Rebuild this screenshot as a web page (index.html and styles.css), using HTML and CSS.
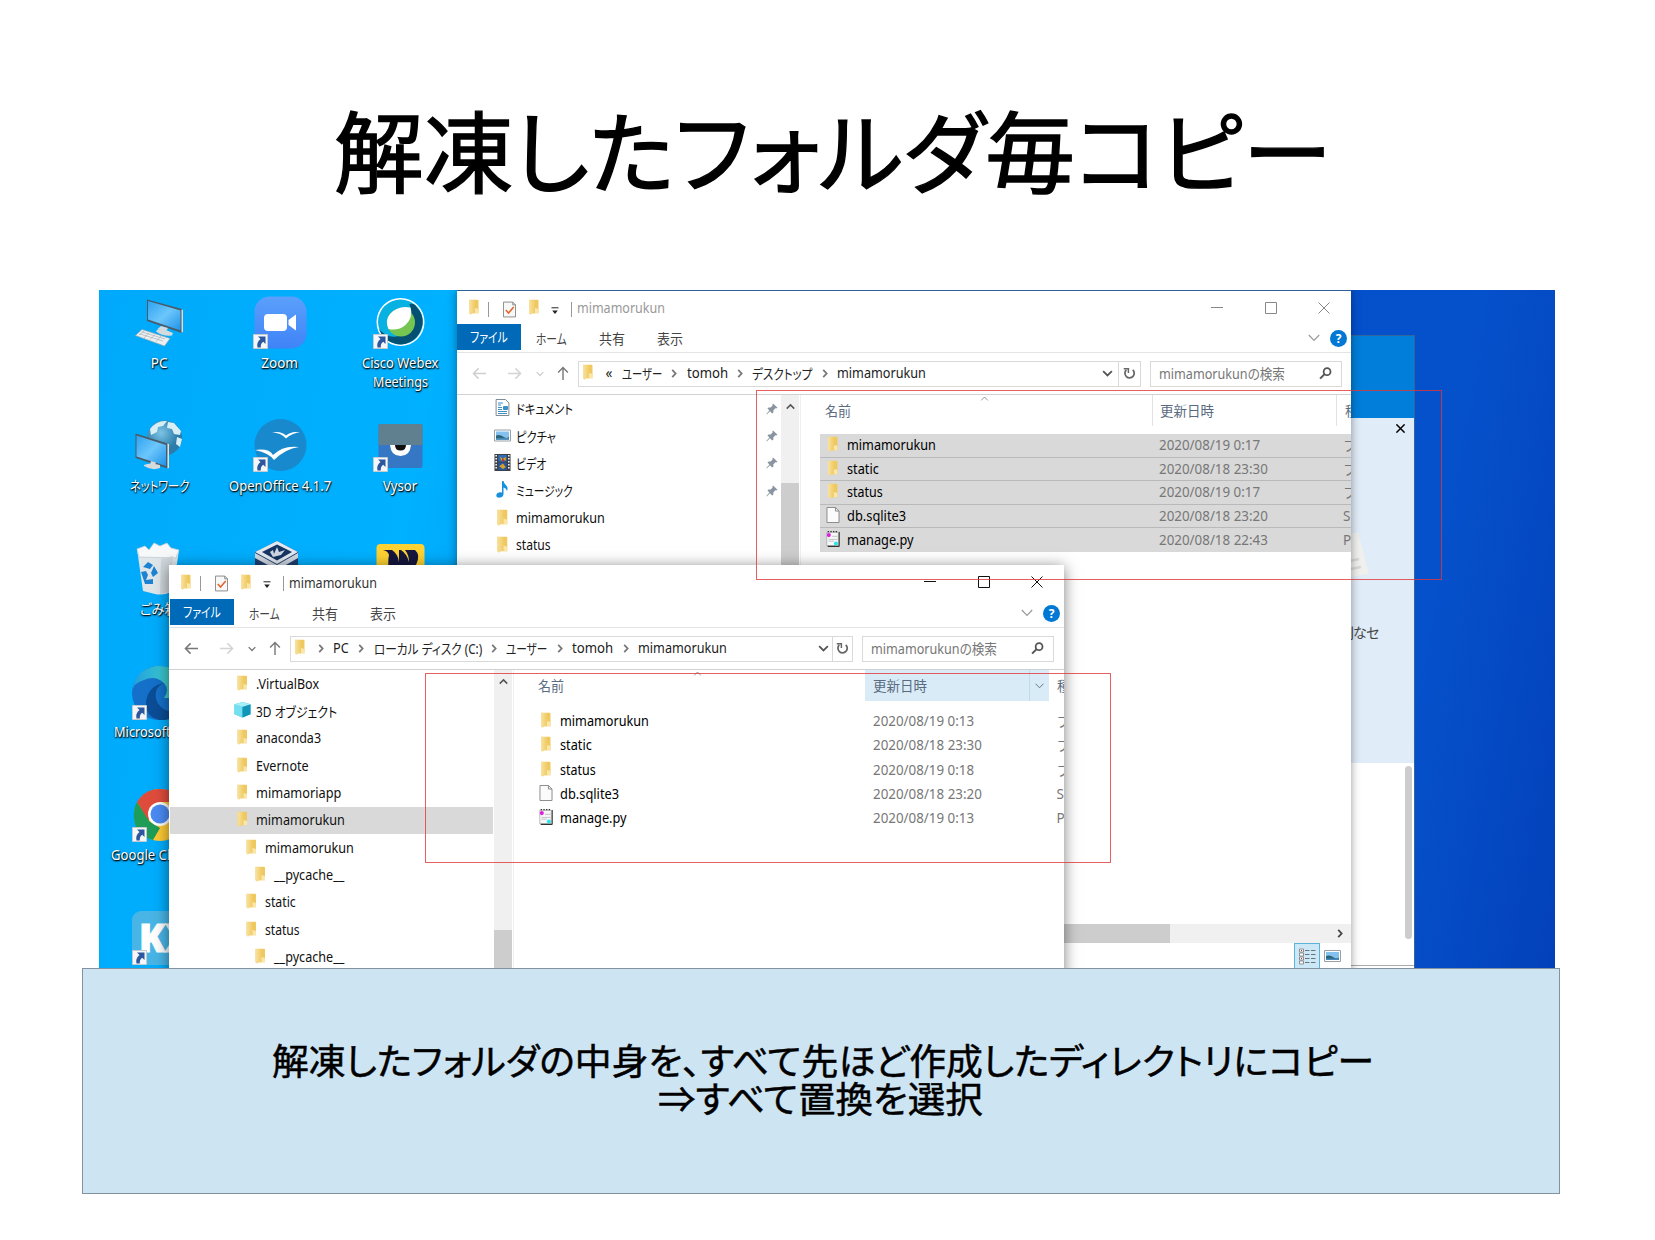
FILE: index.html
```html
<!DOCTYPE html>
<html lang="ja">
<head>
<meta charset="utf-8">
<title>解凍したフォルダ毎コピー</title>
<link rel="stylesheet" href="styles.css">
</head>
<body>
<svg class="defs" aria-hidden="true">
  <defs>
    <linearGradient id="gFolder" x1="0" x2="1"><stop offset="0" stop-color="#f9e2a0"/><stop offset="1" stop-color="#f0cb66"/></linearGradient>
    <linearGradient id="gScreen" x1="0" y1="0" x2="1" y2="1"><stop offset="0" stop-color="#2da2f2"/><stop offset=".5" stop-color="#6cc6fb"/><stop offset="1" stop-color="#1f93e8"/></linearGradient>
    <linearGradient id="gZoom" x1="0" y1="0" x2="0" y2="1"><stop offset="0" stop-color="#5ba0fb"/><stop offset="1" stop-color="#3f83f8"/></linearGradient>
    <linearGradient id="gEdge" x1="0" y1="0" x2="1" y2="0"><stop offset="0" stop-color="#1f9ddf"/><stop offset=".6" stop-color="#3ac6cf"/><stop offset="1" stop-color="#6bdc6a"/></linearGradient>
    <radialGradient id="gGlobe" cx=".4" cy=".35"><stop offset="0" stop-color="#7cc4e6"/><stop offset="1" stop-color="#2b7ca8"/></radialGradient>
  </defs>
  <symbol id="folder" viewBox="0 0 12 16"><path d="M1 .8h8.6q.9 0 .9.9v12.6H4L2.4 15.6 1 14z" fill="#efc95f"/><path d="M1 1h6v13.2H4.2L2.6 15.6 1 14.2z" fill="url(#gFolder)"/><path d="M7 9l3.5 1v4.3H7z" fill="#fae6aa"/></symbol>
  <symbol id="check" viewBox="0 0 14 17"><path d="M.5.5h10l3 3v13H.5z" fill="#f8f8f8" stroke="#858585"/><path d="M10.5.5v3h3" fill="none" stroke="#858585"/><path d="M3 9l3 3.4 5.5-6.6" fill="none" stroke="#e0672c" stroke-width="1.7"/></symbol>
  <symbol id="qat" viewBox="0 0 8 8"><path d="M.5.8h7" stroke="#222"/><path d="M1.2 3.6h5.6L4 7z" fill="#222"/></symbol>
  <symbol id="left" viewBox="0 0 16 14"><path d="M15 7H1.5M7 1.5L1.5 7 7 12.5" fill="none" stroke="currentColor" stroke-width="1.6"/></symbol>
  <symbol id="right" viewBox="0 0 16 14"><path d="M1 7h13.5M9 1.5L14.5 7 9 12.5" fill="none" stroke="currentColor" stroke-width="1.6"/></symbol>
  <symbol id="up" viewBox="0 0 12 16"><path d="M6 15V1.5M.8 7L6 1.5 11.2 7" fill="none" stroke="currentColor" stroke-width="1.5"/></symbol>
  <symbol id="down" viewBox="0 0 12 8"><path d="M1 1.2l5 5 5-5" fill="none" stroke="currentColor" stroke-width="2"/></symbol>
  <symbol id="thin" viewBox="0 0 12 8"><path d="M.8 1l5.2 5.4L11.2 1" fill="none" stroke="currentColor" stroke-width="1.2"/></symbol>
  <symbol id="next" viewBox="0 0 6 10"><path d="M1 1l3.8 4L1 9" fill="none" stroke="currentColor" stroke-width="2"/></symbol>
  <symbol id="refresh" viewBox="0 0 14 14"><path d="M3.5 3.2A5 5 0 1 0 10.5 3" fill="none" stroke="#666" stroke-width="1.9"/><path d="M.8 1.8h5v4.6" fill="none" stroke="#666" stroke-width="1.6"/></symbol>
  <symbol id="search" viewBox="0 0 14 14"><circle cx="8.7" cy="5" r="3.7" fill="none" stroke="#555" stroke-width="1.9"/><path d="M6 7.7L1.2 12.5" stroke="#555" stroke-width="2.2"/></symbol>
  <symbol id="min" viewBox="0 0 12 12"><path d="M0 5.5h12" stroke="currentColor"/></symbol>
  <symbol id="max" viewBox="0 0 12 12"><path d="M.5.5h11v11H.5z" fill="none" stroke="currentColor"/></symbol>
  <symbol id="close" viewBox="0 0 12 12"><path d="M.5.5l11 11M11.5.5l-11 11" stroke="currentColor" fill="none"/></symbol>
  <symbol id="pin" viewBox="0 0 12 12"><path d="M7 .5l4.5 4.3-1.3.7-.9-.2-2 2.1.1 2-1.2 1L4 8.2.7 11.5.3 11 3.4 7.6 1.5 5.6l1-1.1 2.1.1 2-2-.2-1z" fill="#8994a0"/></symbol>
  <symbol id="file" viewBox="0 0 14 17"><path d="M.6.5h9l3.8 3.8v12.2H.6z" fill="#fbfbfb" stroke="#858585"/><path d="M9.6.5v3.8h3.8" fill="none" stroke="#858585"/></symbol>
  <symbol id="py" viewBox="0 0 16 18"><path d="M1 1.5h13v15H1z" fill="#f7f7f7" stroke="#9a9a9a" stroke-width=".7"/><path d="M15 1v16.5M2 17.3h13" stroke="#333" stroke-width="1.2"/><path d="M2 .8h1.6M5 .8h1.6M8 .8h1.6M11 .8h1.6" stroke="#333" stroke-width="1.4"/><circle cx="3.3" cy="4.6" r="2.3" fill="#dd20e0"/><circle cx="11.3" cy="14" r="2.3" fill="#2be3ec"/><path d="M7 6h6M3 9.5h10M3 11.5h6" stroke="#b9bdc9"/></symbol>
  <symbol id="cube" viewBox="0 0 18 17"><path d="M9 0l8.5 2.5V13L9 16.5.5 13V2.500z" fill="#37bfd9"/><path d="M.5 2.500L9 5v11.500L.5 13z" fill="#74dfee"/><path d="M9 5l8.500-2.500V13L9 16.500z" fill="#1295b8"/><path d="M.5 2.500L9 0l8.500 2.500L9 5z" fill="#a8eef7"/></symbol>
  <symbol id="doc" viewBox="0 0 14 17"><path d="M.6.5h9.400l3.400 3.500v12.500H.6z" fill="#fff" stroke="#7e8a94"/><path d="M2.500 4h5M2.500 6h3M8 7.500h4v3H8zM2.500 8.500h4M2.500 10.500h4M2.500 12.500h9M2.500 14.500h9" stroke="#3e8fc4" fill="#3e8fc4"/></symbol>
  <symbol id="pic" viewBox="0 0 17 12"><path d="M.5.5h16v11H.5z" fill="#fff" stroke="#98a0a6"/><path d="M2 2h13v8H2z" fill="#85c1ee"/><path d="M2 6q4-1.500 7 1t6 .5V10H2z" fill="#2d6478"/><path d="M2 8.500h13V10H2z" fill="#4387bd"/></symbol>
  <symbol id="video" viewBox="0 0 17 18"><path d="M0 0h17v18H0z" fill="#3d3f45"/><path d="M4 1h9v7H4z" fill="#2e6bb8"/><path d="M4 9h9v8H4z" fill="#29579c"/><path d="M6 3l3 2 3-2v4H7zM5 13l4-3 3 4-3 2z" fill="#d6a02c"/><path d="M8 4l3 3-3 1z" fill="#b43a2d"/><path d="M1.800 1v16M15.200 1v16" stroke="#fff" stroke-width="1.600" stroke-dasharray="1.600 1.600"/></symbol>
  <symbol id="music" viewBox="0 0 13 17"><path d="M6 0h1.500q.3 2.500 2.500 4.200 2.500 2.300 1 5.800-.6-2.800-3.500-3.400v6.600q-.3 3-4 3.500Q.3 16.700.3 14.500q.2-2.700 3.500-3.200 1.200-.1 2.200.3z" fill="#1790dd"/></symbol>
  <symbol id="list" viewBox="0 0 17 17"><path d="M.5 1h4v3h-4zM.5 5h4v3h-4zM.5 9h4v3h-4zM.5 13h4v3h-4z" fill="#fff" stroke="#777" stroke-width=".8"/><path d="M2 2.500h1M2 10.500h1" stroke="#c23" stroke-width="1"/><path d="M6 2.500h4.500M12 2.500h4.500M6 6.500h4.500M12 6.500h4.500M6 10.500h4.500M12 10.500h4.500M6 14.500h4.500M12 14.500h4.500" stroke="#6b747a"/></symbol>
  <symbol id="badge" viewBox="0 0 15 15"><path d="M.5.500h14v14H.5z" fill="#f4f6f8" stroke="#c3cad0"/><path d="M5 2.500h7.500V10l-2.300-2.200Q7.500 9.500 7.800 13.500H4.500Q3.200 8.500 7.500 5z" fill="#2c579f"/></symbol>
</svg>

<main class="slide">
  <h1 class="title"><span class="fit" data-w="998">解凍したフォルダ毎コピー</span></h1>

  <section class="desktop">
    <div class="icons">
      <div class="app"><svg class="art" viewBox="0 0 54 54"><path d="M15 4.500l35 9.500v24L15 26z" fill="#4b5a66"/><path d="M16 6l32.500 9.500v20L16 24.500z" fill="url(#gScreen)"/><path d="M49.500 14.500l1.500.5v22l-1.500.5z" fill="#ddd"/><path d="M29 31l7 2-2 3-9-1.500zM25 35q8-2 16 3l-1 2.500Q32 42 24 36.500z" fill="#d5dadd"/><path d="M10 34.500l28 9-5.500 7.500L3.500 40.500z" fill="#eceff1" stroke="#9aa7af" stroke-width=".7"/><path d="M10 37l23 7M8 39l23 7M12 36l-5 4M17 38l-5 5M23 39.500l-5 5M29 41l-5 5.500" stroke="#a6b0b6" stroke-width=".7"/></svg><span class="fit" data-w="17">PC</span></div>
      <div class="app"><svg class="art" viewBox="0 0 54 54"><rect x="1.500" y="1.500" width="52" height="52" rx="15" fill="url(#gZoom)"/><rect x="11" y="19" width="23" height="17" rx="4" fill="#fff"/><path d="M35.500 25l7.500-5.500v16L35.500 30z" fill="#fff"/><use href="#badge" x="0" y="39" width="15" height="15"/></svg><span class="fit" data-w="37">Zoom</span></div>
      <div class="app"><svg class="art" viewBox="0 0 54 54"><circle cx="27.500" cy="27" r="24" fill="#fff"/><circle cx="27.500" cy="27" r="22.500" fill="#07b2e3"/><path d="M36.500 9q5-1 7 3 7 7 6 17-3 18-21 20.500Q12 49 6 34q8 10 20 7 14-5 13-17 0-8-2.500-15z" fill="#045072"/><circle cx="28" cy="27.500" r="14" fill="#75c550"/><path d="M37.500 12.500q3 10-5 17.500-7 6-17 4-4-9 2-15.500 8-8.500 20-6z" fill="#fff"/><use href="#badge" x="0" y="39" width="15" height="15"/></svg><span class="fit" data-w="76">Cisco Webex</span><span class="fit" data-w="55">Meetings</span></div>

      <div class="app"><svg class="art" viewBox="0 0 54 54"><circle cx="32.500" cy="20" r="17.500" fill="url(#gGlobe)"/><path d="M18 11q7-9 17-8l-4 5-5 1-1 5-6 3zM36 4l6 1 7 8-1 4-6-1-2-5-5-1zM45 19l5 2-2 8-4-3z" fill="#d8eef5"/><path d="M3.500 15.500l32 10v25L3.500 40z" fill="#4b5a66"/><path d="M4.500 17.500l29.500 9.500v21L4.500 38.500z" fill="url(#gScreen)"/><path d="M35.500 25.500l1.500.5v24l-1.500.5z" fill="#e2e2e2"/><path d="M19 43l5 1.500-1 3-5-1zM12 47q6-3 16 0v3q-8 3-16-2z" fill="#d5dadd"/></svg><span class="fit" data-w="59">ネットワーク</span></div>
      <div class="app"><svg class="art" viewBox="0 0 54 54"><circle cx="27.500" cy="27" r="26" fill="#1889cd"/><path d="M19 14.500q9-2 14 3 6-5 14-3-8 .5-14 6-5-6-14-6zM2 32q14-2 18 5 10-10 26-8-14 2-25 13-5-7-19-10z" fill="#fff"/><use href="#badge" x="0" y="39" width="15" height="15"/></svg><span class="fit" data-w="102">OpenOffice 4.1.7</span></div>
      <div class="app"><svg class="art" viewBox="0 0 54 54"><rect x="5.500" y="6" width="44" height="44" rx="2" fill="#3577c4"/><path d="M5.500 27V8q0-2 2-2h40q2 0 2 2v19z" fill="#61808f"/><path d="M17 27h21q-1 11-10.500 11T17 27z" fill="#fff"/><path d="M22 27h11q0 5.500-5.500 5.500T22 27z" fill="#111"/><use href="#badge" x="0" y="39" width="15" height="15"/></svg><span class="fit" data-w="34">Vysor</span></div>

      <div class="app"><svg class="art" viewBox="0 0 54 54"><path d="M5 8l42 1-6 41q-9 5-18 3l-12-3z" fill="#dfe6ea"/><path d="M5 8l8-3 4 4 5-7 6 3 7-3 4 5 8 2-3 8-37-1z" fill="#f6f8f9" stroke="#c3ccd2" stroke-width=".8"/><path d="M29 18l12-3-3 36-10 2z" fill="#cfd7dc"/><path d="M11 26l5-5 5 3-3 4zM22 25l4 7-5 4-2-4zM9 31l5-1 2 4-2 5 7-1v5h-8z" fill="#1c83d2"/></svg><span class="fit" data-w="38">ごみ箱</span></div>
      <div class="app"><svg class="art" viewBox="0 0 54 54"><path d="M24 0l21 11v28L24 52 2 39V11z" fill="#20406f"/><path d="M24 0l21 11-21 12L2 11z" fill="#e3e9f0"/><path d="M24 3.500l15 7.500-15 8.500-15-8.500z" fill="#163563"/><path d="M17 11l3-2 1 4 3-7 2 5 6-2-4 5-8 2z" fill="#cfd8e4"/><path d="M2 12l22 12v5L2 17zM45 12L24 24v5l21-12z" fill="#d0d8e2"/></svg></div>
      <div class="app"><svg class="art" viewBox="0 0 54 54"><rect x="3.500" y="3" width="48" height="48" rx="4" fill="#fed232"/><path d="M10 9h9q6 4 7 12V9h2q6 4 8 12 0-7-4-12h10q6 5 1 15-2 6-6 10h-6l-3-9-5 9h-6q-3-12-1-20-1-4-6-5z" fill="#16163e"/></svg></div>

      <div class="app"><svg class="art" viewBox="0 0 54 54"><circle cx="27" cy="28" r="27" fill="#1470c9"/><path d="M0 27Q2 5 24 1q24-1 30 20 0 12-12 12H32q6-8 0-15-9-8-20-3Q1 18 0 27z" fill="url(#gEdge)"/><path d="M32 18Q22 22 24 34q4 12 18 13 8-1 10-4-8 13-25 12Q13 51 14 37q2-16 18-19z" fill="#0b4d96"/><use href="#badge" x="0" y="40" width="15" height="15"/></svg><span class="fit" data-w="90">Microsoft Edge</span></div>
      <div class="app"></div><div class="app"></div>

      <div class="app"><svg class="art" viewBox="0 0 54 54"><circle cx="28" cy="27" r="26" fill="#fdc935"/><path d="M5 14Q13 1 28 1q16 0 23 13H28L16 33z" fill="#df4c3c"/><path d="M5 14l12 19 11 7-7 12Q4 48 2 31 1 21 5 14z" fill="#1d9d58"/><circle cx="28" cy="26" r="12" fill="#fff"/><circle cx="28" cy="26" r="9.500" fill="#4b8af4"/><use href="#badge" x="0" y="39" width="15" height="15"/></svg><span class="fit" data-w="97">Google Chrome</span></div>
      <div class="app"></div><div class="app"></div>

      <div class="app"><svg class="art" viewBox="0 0 54 54"><rect x="0" y="0" width="54" height="54" rx="9" fill="#48b5e6"/><text class="kx" x="7" y="41">KX</text><use href="#badge" x="0" y="39" width="15" height="15"/></svg></div>
    </div>

    <div class="store">
      <div class="store-bar"></div>
      <div class="store-hero"><svg class="store-x" viewBox="0 0 12 12"><use href="#close"/></svg>
        <svg class="paper" viewBox="0 0 20 46"><path d="M-6 4L7 0l11 42-24 4z" fill="#f0f0ee"/><path d="M-6 30l14-3M-6 38l16-3" stroke="#d8d8d8" stroke-width="2.500"/></svg>
        <span class="store-text">別なセ</span></div>
      <div class="store-body"><div class="store-thumb"></div></div>
    </div>

    <div class="window back">
      <div class="titlebar">
        <svg class="i-folder"><use href="#folder"/></svg><i class="sep s1"></i><svg class="i-check"><use href="#check"/></svg><svg class="i-folder f2"><use href="#folder"/></svg><svg class="i-qat"><use href="#qat"/></svg><i class="sep s2"></i>
        <span class="fit wtitle" data-w="88">mimamorukun</span>
        <div class="controls"><svg><use href="#min"/></svg><svg><use href="#max"/></svg><svg><use href="#close"/></svg></div>
      </div>
      <div class="tabs"><div class="tab-file"><span class="fit" data-w="38">ファイル</span></div><span class="fit t1" data-w="31">ホーム</span><span class="fit t2" data-w="26">共有</span><span class="fit t3" data-w="26">表示</span><svg class="i-thin"><use href="#thin"/></svg><b class="help">?</b></div>
      <div class="address">
        <svg class="i-left"><use href="#left"/></svg><svg class="i-right"><use href="#right"/></svg><svg class="i-rec"><use href="#down"/></svg><svg class="i-up"><use href="#up"/></svg>
        <div class="field"><svg class="i-folder"><use href="#folder"/></svg><div class="crumbs"><span class="fit" data-w="7">«</span><span class="fit" data-w="40">ユーザー</span><svg><use href="#next"/></svg><span class="fit" data-w="41">tomoh</span><svg><use href="#next"/></svg><span class="fit" data-w="60">デスクトップ</span><svg><use href="#next"/></svg><span class="fit" data-w="89">mimamorukun</span></div><svg class="i-down"><use href="#down"/></svg><div class="refresh"><svg><use href="#refresh"/></svg></div></div>
        <div class="find"><span class="fit" data-w="126">mimamorukunの検索</span><svg><use href="#search"/></svg></div>
      </div>
      <div class="content">
        <div class="nav">
          <div class="node"><svg class="ni"><use href="#doc"/></svg><span class="fit" data-w="57">ドキュメント</span><svg class="pin"><use href="#pin"/></svg></div>
          <div class="node"><svg class="ni"><use href="#pic"/></svg><span class="fit" data-w="40">ピクチャ</span><svg class="pin"><use href="#pin"/></svg></div>
          <div class="node"><svg class="ni"><use href="#video"/></svg><span class="fit" data-w="30">ビデオ</span><svg class="pin"><use href="#pin"/></svg></div>
          <div class="node"><svg class="ni"><use href="#music"/></svg><span class="fit" data-w="57">ミュージック</span><svg class="pin"><use href="#pin"/></svg></div>
          <div class="node"><svg class="ni"><use href="#folder"/></svg><span class="fit" data-w="89">mimamorukun</span></div>
          <div class="node"><svg class="ni"><use href="#folder"/></svg><span class="fit" data-w="35">status</span></div>
        </div>
        <div class="vscroll"><svg><use href="#down"/></svg><div class="vthumb"></div></div>
        <div class="files">
          <div class="head"><span class="fit" data-w="26">名前</span><svg class="sort"><use href="#thin"/></svg><div class="hdate"><span class="fit" data-w="54">更新日時</span></div><span class="kind">種類</span></div>
          <div class="rows">
            <div class="row"><svg><use href="#folder"/></svg><div class="name"><span class="fit" data-w="89">mimamorukun</span></div><div class="date"><span class="fit" data-w="101">2020/08/19 0:17</span></div><span class="kind">ファイル</span></div>
            <div class="row"><svg><use href="#folder"/></svg><div class="name"><span class="fit" data-w="32">static</span></div><div class="date"><span class="fit" data-w="109">2020/08/18 23:30</span></div><span class="kind">ファイル</span></div>
            <div class="row"><svg><use href="#folder"/></svg><div class="name"><span class="fit" data-w="36">status</span></div><div class="date"><span class="fit" data-w="101">2020/08/19 0:17</span></div><span class="kind">ファイル</span></div>
            <div class="row"><svg><use href="#file"/></svg><div class="name"><span class="fit" data-w="59">db.sqlite3</span></div><div class="date"><span class="fit" data-w="109">2020/08/18 23:20</span></div><span class="kind">SQL</span></div>
            <div class="row"><svg><use href="#py"/></svg><div class="name"><span class="fit" data-w="67">manage.py</span></div><div class="date"><span class="fit" data-w="109">2020/08/18 22:43</span></div><span class="kind">PY</span></div>
          </div>
          <div class="hscroll"><div class="hthumb"></div><svg><use href="#next"/></svg></div>
        </div>
      </div>
      <div class="views"><div class="view-on"><svg><use href="#list"/></svg></div><svg class="view-pic"><use href="#pic"/></svg></div>
    </div>

    <div class="window front">
      <div class="titlebar">
        <svg class="i-folder"><use href="#folder"/></svg><i class="sep s1"></i><svg class="i-check"><use href="#check"/></svg><svg class="i-folder f2"><use href="#folder"/></svg><svg class="i-qat"><use href="#qat"/></svg><i class="sep s2"></i>
        <span class="fit wtitle" data-w="88">mimamorukun</span>
        <div class="controls"><svg><use href="#min"/></svg><svg><use href="#max"/></svg><svg><use href="#close"/></svg></div>
      </div>
      <div class="tabs"><div class="tab-file"><span class="fit" data-w="38">ファイル</span></div><span class="fit t1" data-w="31">ホーム</span><span class="fit t2" data-w="26">共有</span><span class="fit t3" data-w="26">表示</span><svg class="i-thin"><use href="#thin"/></svg><b class="help">?</b></div>
      <div class="address">
        <svg class="i-left"><use href="#left"/></svg><svg class="i-right"><use href="#right"/></svg><svg class="i-rec"><use href="#down"/></svg><svg class="i-up"><use href="#up"/></svg>
        <div class="field"><svg class="i-folder"><use href="#folder"/></svg><div class="crumbs"><svg><use href="#next"/></svg><span class="fit" data-w="16">PC</span><svg><use href="#next"/></svg><span class="fit" data-w="108">ローカル ディスク (C:)</span><svg><use href="#next"/></svg><span class="fit" data-w="41">ユーザー</span><svg><use href="#next"/></svg><span class="fit" data-w="41">tomoh</span><svg><use href="#next"/></svg><span class="fit" data-w="89">mimamorukun</span></div><svg class="i-down"><use href="#down"/></svg><div class="refresh"><svg><use href="#refresh"/></svg></div></div>
        <div class="find"><span class="fit" data-w="126">mimamorukunの検索</span><svg><use href="#search"/></svg></div>
      </div>
      <div class="content">
        <div class="nav">
          <div class="node"><svg class="ni"><use href="#folder"/></svg><span class="fit" data-w="63">.VirtualBox</span></div>
          <div class="node"><svg class="ni"><use href="#cube"/></svg><span class="fit" data-w="81">3D オブジェクト</span></div>
          <div class="node"><svg class="ni"><use href="#folder"/></svg><span class="fit" data-w="65">anaconda3</span></div>
          <div class="node"><svg class="ni"><use href="#folder"/></svg><span class="fit" data-w="53">Evernote</span></div>
          <div class="node"><svg class="ni"><use href="#folder"/></svg><span class="fit" data-w="85">mimamoriapp</span></div>
          <div class="node current"><svg class="ni"><use href="#folder"/></svg><span class="fit" data-w="89">mimamorukun</span></div>
          <div class="node l1"><svg class="ni"><use href="#folder"/></svg><span class="fit" data-w="89">mimamorukun</span></div>
          <div class="node l2"><svg class="ni"><use href="#folder"/></svg><span class="fit" data-w="70">__pycache__</span></div>
          <div class="node l1"><svg class="ni"><use href="#folder"/></svg><span class="fit" data-w="31">static</span></div>
          <div class="node l1"><svg class="ni"><use href="#folder"/></svg><span class="fit" data-w="35">status</span></div>
          <div class="node l2"><svg class="ni"><use href="#folder"/></svg><span class="fit" data-w="70">__pycache__</span></div>
        </div>
        <div class="vscroll"><svg><use href="#down"/></svg><div class="vthumb"></div></div>
        <div class="files">
          <div class="head"><span class="fit" data-w="26">名前</span><svg class="sort"><use href="#thin"/></svg><div class="hdate"><span class="fit" data-w="54">更新日時</span><i class="drop"><svg><use href="#thin"/></svg></i></div><span class="kind">種類</span></div>
          <div class="rows">
            <div class="row"><svg><use href="#folder"/></svg><div class="name"><span class="fit" data-w="89">mimamorukun</span></div><div class="date"><span class="fit" data-w="101">2020/08/19 0:13</span></div><span class="kind">ファイル</span></div>
            <div class="row"><svg><use href="#folder"/></svg><div class="name"><span class="fit" data-w="32">static</span></div><div class="date"><span class="fit" data-w="109">2020/08/18 23:30</span></div><span class="kind">ファイル</span></div>
            <div class="row"><svg><use href="#folder"/></svg><div class="name"><span class="fit" data-w="36">status</span></div><div class="date"><span class="fit" data-w="101">2020/08/19 0:18</span></div><span class="kind">ファイル</span></div>
            <div class="row"><svg><use href="#file"/></svg><div class="name"><span class="fit" data-w="59">db.sqlite3</span></div><div class="date"><span class="fit" data-w="109">2020/08/18 23:20</span></div><span class="kind">SQL</span></div>
            <div class="row"><svg><use href="#py"/></svg><div class="name"><span class="fit" data-w="67">manage.py</span></div><div class="date"><span class="fit" data-w="101">2020/08/19 0:13</span></div><span class="kind">PY</span></div>
          </div>
        </div>
      </div>
    </div>
    <div class="mark mark-a"></div>
    <div class="mark mark-b"></div>
  </section>

  <section class="callout">
    <p><span class="fit" data-w="1102">解凍したフォルダの中身を、すべて先ほど作成したディレクトリにコピー</span></p>
    <p><span class="fit" data-w="325">⇒すべて置換を選択</span></p>
  </section>
</main>
<script src="fit.js"></script>
</body>
</html>
```
FILE: styles.css
```css
* { box-sizing: border-box; }
body { margin: 0; background: #fff; color: #000; font-family: "Noto Sans", "Noto Sans CJK JP", sans-serif; font-size: 13.5px; }
svg { display: block; flex: none; overflow: visible; }
.defs { position: absolute; width: 0; height: 0; }
.fit { display: inline-block; flex: none; white-space: nowrap; font-feature-settings: "palt"; }
.fit > span { display: inline-block; transform-origin: left center; }

.slide { width: 1655px; height: 1240px; overflow: hidden; display: flex; flex-direction: column; }
.title { margin: 0; height: 290px; padding-top: 88px; padding-left: 3px; flex: none; text-align: center; font: 400 89px/120px "Noto Sans CJK JP", sans-serif; -webkit-text-stroke: 1.4px #000; }

.callout { margin-left: 82px; width: 1478px; height: 226px; flex: none; background: #cde4f3; border: 1px solid #82939f; padding: 71px 20px 0 0; text-align: center; font: 400 36px/38px "Noto Sans CJK JP", sans-serif; -webkit-text-stroke: .5px #000; }
.callout p { margin: 0; height: 38px; }
.callout p + p { padding-left: 6px; }

.desktop { position: relative; flex: none; margin-left: 99px; width: 1456px; height: 678px; overflow: hidden; background: linear-gradient(100deg, #00a9fb 0, #00b1ff 22%, #0450cc 75%, #0551cb 88%, #0341ba 100%); }
.icons { display: grid; grid-template-columns: repeat(3, 120.5px); grid-auto-rows: 123.2px; padding-top: 5px; }
.app { display: flex; flex-direction: column; align-items: center; color: #fff; font-size: 13.5px; line-height: 19px; text-shadow: 0 1px 2px #000, 1px 1px 1px rgba(0,0,0,.8); }
.art { width: 54px; height: 54px; margin-bottom: 4.500px; }
.kx { font: 800 38px "Open Sans", sans-serif; fill: #fff; stroke: #fff; text-shadow: none; }

.store { position: absolute; left: 1240px; top: 45px; width: 76px; height: 640px; border: 1px solid #33679c; display: flex; flex-direction: column; background: #fff; }
.store-bar { height: 82px; background: #007ed9; }
.store-hero { position: relative; height: 345px; background: #e0ecf8; }
.store-x { position: absolute; right: 9px; top: 6px; width: 9px; height: 9px; color: #000; stroke-width: 2; }
.paper { position: absolute; left: 11px; top: 114px; width: 20px; height: 46px; }
.store-text { position: absolute; left: 0; top: 205px; font-size: 14px; line-height: 20px; color: #444; letter-spacing: -1px; white-space: nowrap; }
.store-body { height: 203px; border-bottom: 1px solid #aaa; padding: 3px 2px; }
.store-thumb { width: 7px; height: 173px; border-radius: 4px; background: #cdcdcd; margin-left: auto; }

.window { position: absolute; background: #fff; width: 895px; height: 700px; display: flex; flex-direction: column; overflow: hidden; }
.back { left: 358px; top: 0; width: 894px; border-top: 1px solid #2c6296; box-shadow: 0 0 9px rgba(0,0,0,.4); }
.front { left: 70px; top: 275px; box-shadow: 0 2px 14px rgba(0,0,0,.5); }
.window .fit { margin-top: -2px; }
.titlebar { height: 34px; padding: 3px 21px 0 11px; display: flex; align-items: center; flex: none; color: #333; }
.back .titlebar { color: #999; height: 33px; }
.i-folder { width: 12px; height: 16px; margin-top: -4px; }
.sep { width: 1px; height: 15px; background: #999; flex: none; }
.s1 { margin-left: 8px; }
.i-check { width: 13px; height: 17px; margin-left: 14px; }
.f2 { margin-left: 11.500px; }
.i-qat { width: 8px; height: 8px; margin: 3px 0 0 11px; }
.s2 { margin-left: 12px; }
.wtitle { margin-left: 5px; }
.controls { margin-left: auto; display: flex; gap: 41.500px; color: #111; }
.controls svg { width: 12px; height: 12px; margin-top: -3px; }
.back .controls { color: #888; }
.tabs { height: 29px; padding-right: 4px; border-bottom: 1px solid #e2e4e6; display: flex; align-items: center; flex: none; color: #444; }
.tab-file { width: 64px; height: 26px; margin-left: 1px; align-self: flex-start; background: #006ab8; color: #fff; display: flex; align-items: center; justify-content: center; }
.window .tabs > .fit { margin-top: 0; }
.t1 { margin-left: 15px; }
.t2 { margin-left: 31.500px; }
.t3 { margin-left: 32px; }
.back .tab-file { margin-left: 0; }
.i-thin { width: 12px; height: 8px; margin-left: auto; color: #999; }
.help { width: 17px; height: 17px; border-radius: 50%; background: #0078d4; color: #fff; margin-left: 10px; text-align: center; font: 700 12px/17px "Noto Sans", sans-serif; }
.address { height: 42px; display: flex; align-items: center; flex: none; border-bottom: 1px solid #cfd2d5; padding-left: 15px; color: #777; }
.i-left { width: 15px; height: 13px; }
.i-right { width: 15px; height: 13px; margin-left: 20px; color: #d4d4d4; }
.i-rec { width: 8px; height: 6px; margin-left: 14px; }
.i-up { width: 12px; height: 15px; margin-left: 13px; }
.back .i-left, .back .i-rec { color: #cfcfcf; }
.field { width: 563px; height: 26px; margin-left: 9px; border: 1px solid #d9d9d9; display: flex; align-items: center; padding-left: 3px; }
.crumbs { display: flex; gap: 9.400px; align-items: center; margin-left: 11.500px; color: #222; }
.crumbs svg { width: 6px; height: 9px; color: #777; }
.i-down { width: 11px; height: 7px; margin-left: auto; margin-right: 3px; color: #555; }
.refresh { width: 20px; height: 24px; border-left: 1px solid #d9d9d9; display: grid; place-items: center; flex: none; }
.back .i-down { margin-right: 5px; }
.back .refresh { width: 22px; }
.refresh svg { width: 13px; height: 13px; }
.find { width: 192px; height: 26px; margin-left: 9px; border: 1px solid #d9d9d9; display: flex; align-items: center; justify-content: space-between; padding: 0 9px 0 7.500px; color: #777; }
.find svg { width: 13px; height: 13px; margin-top: -1px; }

.content { display: flex; flex: none; height: 549px; overflow: hidden; }
.nav { width: 324px; flex: none; padding: 0 0 0 1px; }
.node { height: 27.350px; display: flex; align-items: center; padding-left: 64px; color: #111; }
.window .node .fit { margin-top: 0; }
.ni { width: 17px; height: 16px; margin-right: 4.500px; margin-top: -2px; }
.back .node { padding-left: 36px; }
.back .ni { height: 17px; }
.back .node .fit { margin-top: -1px; }
.current { background: #d9d9d9; }
.l1 { padding-left: 73px; }
.l2 { padding-left: 82px; }
.pin { width: 12px; height: 12px; margin-left: auto; margin-right: 3px; }
.vscroll { width: 18px; flex: none; background: #f0f0f0; display: flex; flex-direction: column; align-items: center; justify-content: space-between; padding-top: 8px; }
.front .vscroll { margin-left: 1px; }
.vscroll svg { width: 9px; height: 7px; transform: rotate(180deg); color: #555; }
.vthumb { width: 18px; height: 460px; background: #cdcdcd; }
.front .vthumb { height: 289px; }
.files { flex: 1; margin-left: 1px; border-left: 1px solid #f0f0f0; display: flex; flex-direction: column; overflow: hidden; }
.back .files { margin-left: 1px; }
.head { height: 31px; position: relative; display: flex; align-items: center; padding-left: 24px; color: #5a6b80; padding-top: 0; }
.sort { position: absolute; left: 179px; top: 1px; width: 9px; height: 5px; transform: rotate(180deg); color: #777; }
.hdate { width: 185px; height: 31px; margin-left: 301px; padding: 0 0 0 7px; display: flex; align-items: center; border: solid #e2e2e2; border-width: 0 1px; flex: none; }
.front .hdate { width: 184px; background: #d9ebf7; border: 0; margin-left: 301px; padding-left: 8px; }
.drop { height: 31px; width: 20px; margin: 0 0 0 auto; border-left: 1px solid #c0dcec; display: grid; place-items: center; }
.drop svg { width: 9px; height: 6px; }
.kind { margin-left: 8px; white-space: nowrap; overflow: hidden; flex: 1; color: #5a6b80; }
.head .kind { margin-top: -2px; }
.rows { padding-top: 8px; }
.window .row .fit { margin-top: 0; }
.row { display: flex; align-items: center; height: 24.300px; padding-left: 24px; }
.row .kind { color: #777; margin-left: 10px; }
.back .row { height: 23.600px; margin-left: 19px; padding-left: 5px; background: #d9d9d9; border-bottom: 1px solid #b9b9b9; }
.back .row:last-child { border-bottom: 0; }
.row svg { width: 16px; height: 16px; margin-top: -2px; }
.row .name { width: 312.500px; margin-left: 6px; flex: none; }
.back .row .name { width: 312px; margin-left: 6px; }
.row .date { width: 174px; flex: none; color: #777; }
.hscroll { height: 19px; margin-top: auto; background: #f0f0f0; display: flex; align-items: center; justify-content: space-between; padding-right: 8px; flex: none; }
.hthumb { width: 369px; height: 19px; background: #cdcdcd; }
.back .content { height: 548px; }
.hscroll svg { width: 6px; height: 9px; color: #444; }
.views { height: 27px; display: flex; justify-content: flex-end; align-items: center; padding-right: 10px; gap: 4px; }
.view-on { width: 26px; height: 27px; border: 1px solid #5bb3d9; background: #cce8f6; display: grid; place-items: center; }
.view-on svg { width: 17px; height: 17px; }
.view-pic { width: 17px; height: 12px; margin-top: -2px; }

.mark { position: absolute; border: 1.500px solid rgba(226,54,54,.8); }
.mark-a { left: 657px; top: 100px; width: 686px; height: 190px; }
.mark-b { left: 326px; top: 383px; width: 686px; height: 190px; }
```
FILE: fit.js
```js
// Condense or widen each label horizontally to its set width.
document.querySelectorAll('.fit').forEach(el => {
  const inner = document.createElement('span');
  inner.textContent = el.textContent;
  el.textContent = '';
  el.appendChild(inner);
  const target = Number(el.dataset.w);
  const natural = inner.offsetWidth;
  el.style.width = target + 'px';
  inner.style.transform = `scaleX(${target / natural})`;
});
```
